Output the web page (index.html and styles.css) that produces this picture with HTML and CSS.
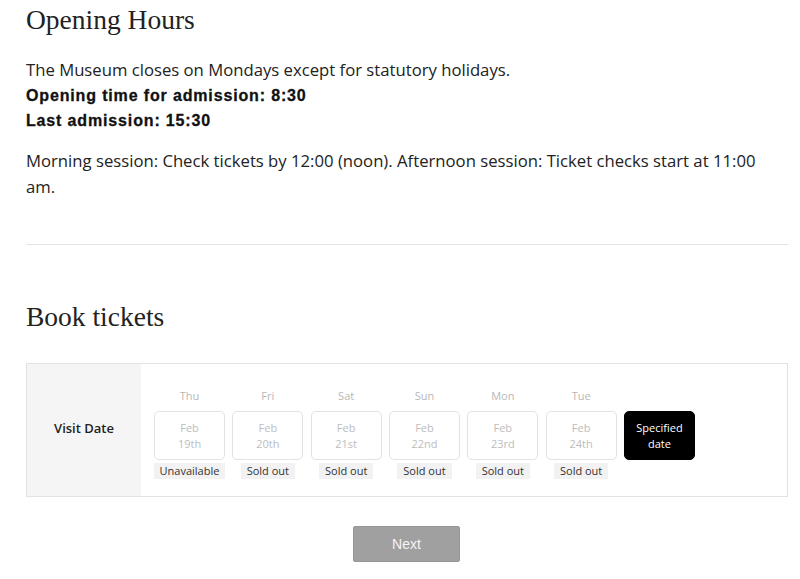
FILE: index.html
```html
<!DOCTYPE html>
<html lang="en">
<head>
<meta charset="utf-8">
<title>Opening Hours</title>
<link rel="stylesheet" href="styles.css">
</head>
<body>
<main class="page">
  <section class="hours">
    <h2 class="title">Opening Hours</h2>
    <p class="text">The Museum closes on Mondays except for statutory holidays.</p>
    <p class="strong">Opening time for admission: 8:30</p>
    <p class="strong">Last admission: 15:30</p>
    <p class="text session">Morning session: Check tickets by 12:00 (noon). Afternoon session: Ticket checks start at 11:00 am.</p>
  </section>
  <hr class="divider">
  <section class="book">
    <h2 class="title">Book tickets</h2>
    <div class="panel">
      <div class="label">Visit Date</div>
      <div class="dates">
        <div class="day">
          <div class="dow">Thu</div>
          <div class="box">Feb<br>19th</div>
          <div class="tag">Unavailable</div>
        </div>
        <div class="day">
          <div class="dow">Fri</div>
          <div class="box">Feb<br>20th</div>
          <div class="tag">Sold out</div>
        </div>
        <div class="day">
          <div class="dow">Sat</div>
          <div class="box">Feb<br>21st</div>
          <div class="tag">Sold out</div>
        </div>
        <div class="day">
          <div class="dow">Sun</div>
          <div class="box">Feb<br>22nd</div>
          <div class="tag">Sold out</div>
        </div>
        <div class="day">
          <div class="dow">Mon</div>
          <div class="box">Feb<br>23rd</div>
          <div class="tag">Sold out</div>
        </div>
        <div class="day">
          <div class="dow">Tue</div>
          <div class="box">Feb<br>24th</div>
          <div class="tag">Sold out</div>
        </div>
        <div class="day">
          <div class="dow">&nbsp;</div>
          <div class="box specified">Specified<br>date</div>
        </div>
      </div>
    </div>
    <div class="actions">
      <button class="next" type="button">Next</button>
    </div>
  </section>
</main>
</body>
</html>
```
FILE: styles.css
```css
* { box-sizing: border-box; }
html, body { margin: 0; padding: 0; background: #fff; }
body {
  font-family: "Open Sans", "DejaVu Sans", sans-serif;
  color: #222;
}
.page { padding: 0 12px 0 26px; }
.hours { padding-right: 10px; }
.title {
  font-family: "Liberation Serif", serif;
  font-weight: 400;
  font-size: 27.5px;
  line-height: 40px;
  margin: 0;
  color: #222;
}
.text {
  font-size: 16.7px;
  line-height: 26px;
  margin: 0;
}
.hours .text:first-of-type { margin-top: 17px; }
.strong {
  font-family: "Liberation Sans", Arial, sans-serif;
  font-weight: 700;
  font-size: 16px;
  letter-spacing: 0.85px;
  -webkit-text-stroke: 0.3px #111;
  line-height: 25px;
  margin: 0;
  color: #111;
}
.session { margin-top: 15px; }
.divider {
  border: 0;
  border-top: 1px solid #e4e4e4;
  margin: 44px 0 0;
}
.book .title { margin-top: 52px; }
.panel {
  margin-top: 26px;
  border: 1px solid #e2e2e2;
  display: flex;
  height: 134px;
}
.label {
  width: 114px;
  background: #f5f5f5;
  display: flex;
  align-items: center;
  justify-content: center;
  font-size: 13px;
  font-weight: 600;
  color: #222;
  padding-bottom: 5px;
}
.dates {
  display: flex;
  gap: 7.33px;
  padding: 24px 0 0 13px;
}
.day {
  width: 71px;
  display: flex;
  flex-direction: column;
  align-items: center;
}
.dow {
  font-size: 11px;
  color: #b8b8b8;
  line-height: 16px;
  height: 16px;
}
.box {
  margin-top: 7px;
  width: 71px;
  height: 49px;
  border: 1px solid #e2e2e2;
  border-radius: 5px;
  display: flex;
  align-items: center;
  justify-content: center;
  text-align: center;
  font-size: 11px;
  line-height: 16px;
  color: #bdbdbd;
}
.box.specified {
  background: #000;
  border-color: #000;
  color: #fff;
}
.tag {
  margin-top: 3px;
  background: #f2f2f2;
  font-size: 11px;
  line-height: 16px;
  padding: 0 6px;
  color: #333;
}
.actions {
  display: flex;
  justify-content: center;
  padding-top: 29px;
}
.next {
  width: 107px;
  height: 36px;
  background: #a0a0a0;
  border: 1px solid #979797;
  border-radius: 2px;
  color: #f4f4f4;
  font-family: "Liberation Sans", Arial, sans-serif;
  font-size: 14px;
  margin-left: -1px;
}
```
